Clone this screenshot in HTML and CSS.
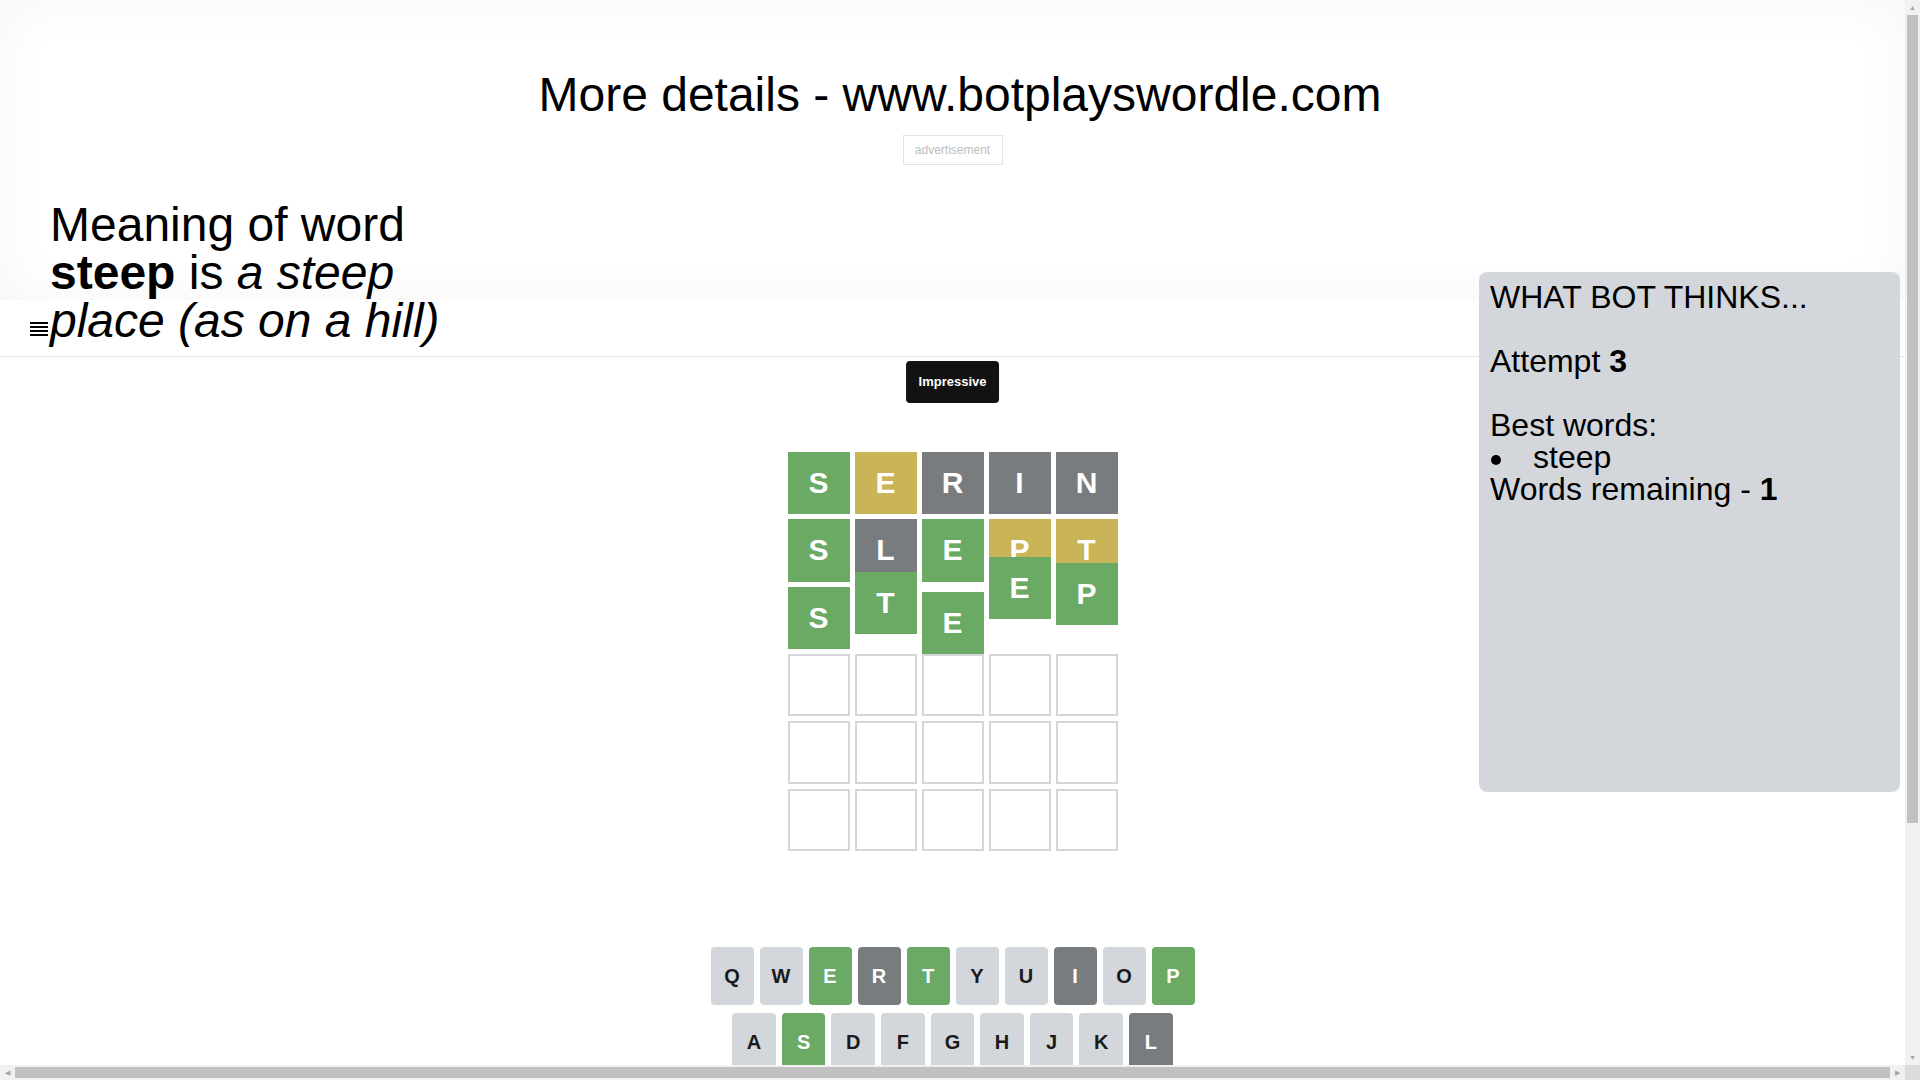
FILE: index.html
```html
<!DOCTYPE html>
<html lang="en">
<head>
    <meta charset="UTF-8">
    <meta name="viewport" content="width=device-width, initial-scale=1.0">
    <title>Bot plays Wordle</title>
    <link rel="stylesheet" href="styles.css">
</head>
<body>

<div class="top">
    <h1>More details - www.botplayswordle.com</h1>
    <div class="ad">advertisement</div>
    <p class="meaning">Meaning of word <b>steep</b> is <i>a steep place (as on a hill)</i></p>
</div>

<header class="nav">
    <svg class="menu" width="18" height="14" viewBox="0 0 18 14">
        <rect x="0" y="0" width="18" height="2" fill="#000"/>
        <rect x="0" y="4" width="18" height="2" fill="#000"/>
        <rect x="0" y="8" width="18" height="2" fill="#000"/>
        <rect x="0" y="12" width="18" height="2" fill="#000"/>
    </svg>
</header>

<div class="bot-panel">
    WHAT BOT THINKS...<br><br>
    Attempt <b>3</b><br><br>
    Best words:
    <ul>
        <li>steep</li>
    </ul>
    Words remaining - <b>1</b>
</div>

<div class="game">
    <div class="toast">Impressive</div>

    <div class="board">
        <div class="board-row">
            <div class="tile correct">s</div>
            <div class="tile present">e</div>
            <div class="tile absent">r</div>
            <div class="tile absent">i</div>
            <div class="tile absent">n</div>
        </div>
        <div class="board-row">
            <div class="tile correct">s</div>
            <div class="tile absent">l</div>
            <div class="tile correct">e</div>
            <div class="tile present">p</div>
            <div class="tile present">t</div>
        </div>
        <div class="board-row">
            <div class="tile correct bounce">s</div>
            <div class="tile correct bounce hop-2">t</div>
            <div class="tile correct bounce drop-1">e</div>
            <div class="tile correct bounce hop-4">e</div>
            <div class="tile correct bounce hop-3">p</div>
        </div>
        <div class="board-row">
            <div class="tile"></div><div class="tile"></div><div class="tile"></div><div class="tile"></div><div class="tile"></div>
        </div>
        <div class="board-row">
            <div class="tile"></div><div class="tile"></div><div class="tile"></div><div class="tile"></div><div class="tile"></div>
        </div>
        <div class="board-row">
            <div class="tile"></div><div class="tile"></div><div class="tile"></div><div class="tile"></div><div class="tile"></div>
        </div>
    </div>

    <div class="keyboard">
        <div class="key-row">
            <button>q</button>
            <button>w</button>
            <button class="correct">e</button>
            <button class="absent">r</button>
            <button class="correct">t</button>
            <button>y</button>
            <button>u</button>
            <button class="absent">i</button>
            <button>o</button>
            <button class="correct">p</button>
        </div>
        <div class="key-row">
            <div class="spacer"></div>
            <button>a</button>
            <button class="correct">s</button>
            <button>d</button>
            <button>f</button>
            <button>g</button>
            <button>h</button>
            <button>j</button>
            <button>k</button>
            <button class="absent">l</button>
            <div class="spacer"></div>
        </div>
        <div class="key-row">
            <button class="wide">enter</button>
            <button>z</button>
            <button>x</button>
            <button>c</button>
            <button>v</button>
            <button>b</button>
            <button class="absent">n</button>
            <button>m</button>
            <button class="wide">
                <svg width="24" height="24" viewBox="0 0 24 24"><path fill="#1a1a1b" d="M22 3H7c-.69 0-1.23.35-1.59.88L0 12l5.41 8.11c.36.53.9.89 1.59.89h15c1.1 0 2-.9 2-2V5c0-1.1-.9-2-2-2zm0 16H7.07L2.4 12l4.66-7H22v14zm-11.59-2L14 13.41 17.59 17 19 15.59 15.41 12 19 8.41 17.59 7 14 10.59 10.41 7 9 8.41 12.59 12 9 15.59z"/></svg>
            </button>
        </div>
    </div>
</div>

<!-- window scrollbars as they appear in the capture -->
<div class="scroll-v">
    <div class="arrow">&#9650;</div>
    <div class="thumb-v"></div>
    <div class="track-fill"></div>
    <div class="arrow">&#9660;</div>
</div>
<div class="scroll-h">
    <div class="arrow">&#9664;</div>
    <div class="thumb-h"></div>
    <div class="arrow">&#9654;</div>
</div>
<div class="scroll-corner"></div>

</body>
</html>
```

FILE: styles.css
```css
* {
    box-sizing: border-box;
}
body {
    position: relative;
    width: calc(100vw - 15px);
    margin: 0;
    font-family: 'Liberation Sans', Arial, sans-serif;
    color: #000;
    background: #fff;
}

/* top area with the site link and the word meaning */
.top {
    height: 300px;
    padding-top: 67px;
    text-align: center;
    background: #fff;
    box-shadow: inset 0 0 50px 6px rgba(0, 0, 0, 0.035);
}
.top h1 {
    width: 100vw;
    margin: 0;
    font-size: 48px;
    font-weight: normal;
}
.ad {
    display: inline-block;
    width: 100px;
    height: 30px;
    margin-top: 13px;
    border: 1px solid #e2e2e2;
    font-size: 12px;
    line-height: 28px;
    color: #bdbdbd;
}
.meaning {
    position: relative;
    z-index: 2;
    width: 420px;
    margin: 36px 0 0 50px;
    font-size: 48px;
    line-height: 48px;
    text-align: left;
}

.nav {
    height: 57px;
    display: flex;
    align-items: center;
    padding-left: 30px;
    background: #fff;
    border-bottom: 1px solid #e3e4e6;
}
.menu {
    display: block;
    margin-top: 1px;
}

/* side panel with the bot's reasoning */
.bot-panel {
    position: absolute;
    top: 272px;
    right: 5px;
    width: 421px;
    height: 520px;
    padding: 9px 11px;
    background: #d3d6da;
    border-radius: 8px;
    font-size: 32px;
    line-height: 32px;
    z-index: 3;
}
.bot-panel ul {
    margin: 0;
    padding: 0;
    list-style: none;
}
.bot-panel li::before {
    content: "";
    display: inline-block;
    width: 10px;
    height: 10px;
    margin: 0 32px 0 1px;
    border-radius: 50%;
    background: #000;
    vertical-align: middle;
}

.game {
    position: relative;
    padding: 95px 0 220px;
}
.toast {
    position: absolute;
    top: 4px;
    left: 50%;
    transform: translateX(-50%);
    padding: 13px;
    background: #121212;
    color: #fff;
    border-radius: 4px;
    font-size: 13px;
    font-weight: bold;
    line-height: 16px;
    z-index: 4;
}

.board {
    width: 330px;
    height: 399px;
    margin: 0 auto;
    display: grid;
    grid-template-rows: repeat(6, 1fr);
    gap: 5px;
}
.board-row {
    display: grid;
    grid-template-columns: repeat(5, 1fr);
    gap: 5px;
}
.tile {
    display: flex;
    justify-content: center;
    align-items: center;
    border: 2px solid #d3d6da;
    font-size: 30px;
    font-weight: bold;
    text-transform: uppercase;
    color: #fff;
}
.tile.correct {
    background: #6aaa64;
    border-color: #6aaa64;
}
.tile.present {
    background: #c9b458;
    border-color: #c9b458;
}
.tile.absent {
    background: #787c7e;
    border-color: #787c7e;
}
/* winning row caught mid bounce */
.bounce {
    transform: translateY(0);
}
.bounce.hop-2 {
    transform: translateY(-15px);
}
.bounce.drop-1 {
    transform: translateY(5px);
}
.bounce.hop-3 {
    transform: translateY(-24px);
}
.bounce.hop-4 {
    transform: translateY(-30px);
}

.keyboard {
    width: 484px;
    margin: 96px auto 0;
}
.key-row {
    display: flex;
    margin-bottom: 8px;
}
.key-row button {
    flex: 1;
    height: 58px;
    margin: 0 6px 0 0;
    padding: 0;
    border: 0;
    border-radius: 4px;
    background: #d3d6da;
    color: #1a1a1b;
    font-family: 'Liberation Sans', Arial, sans-serif;
    font-size: 20px;
    font-weight: bold;
    text-transform: uppercase;
    display: flex;
    justify-content: center;
    align-items: center;
    cursor: pointer;
}
.key-row button:last-of-type {
    margin: 0;
}
.key-row button.wide {
    flex: 1.5;
    font-size: 12px;
}
.key-row button.correct {
    background: #6aaa64;
    color: #fff;
}
.key-row button.absent {
    background: #787c7e;
    color: #fff;
}
.spacer {
    flex: 0.5;
}

/* scrollbars */
.scroll-v, .scroll-h {
    position: fixed;
    display: flex;
    background: #f1f1f1;
    z-index: 10;
}
.scroll-v {
    top: 0;
    right: 0;
    width: 15px;
    height: calc(100vh - 15px);
    flex-direction: column;
}
.scroll-h {
    left: 0;
    bottom: 0;
    width: calc(100vw - 15px);
    height: 15px;
}
.arrow {
    flex: none;
    width: 15px;
    height: 15px;
    font-size: 7px;
    line-height: 15px;
    text-align: center;
    color: #a3a3a3;
}
.thumb-v {
    height: 808px;
    margin: 0 2px;
    background: #c1c1c1;
}
.track-fill {
    flex: 1;
}
.thumb-h {
    flex: 1;
    margin: 2px 0;
    background: #c1c1c1;
}
.scroll-corner {
    position: fixed;
    right: 0;
    bottom: 0;
    width: 15px;
    height: 15px;
    background: #dcdcdc;
    z-index: 10;
}
```
